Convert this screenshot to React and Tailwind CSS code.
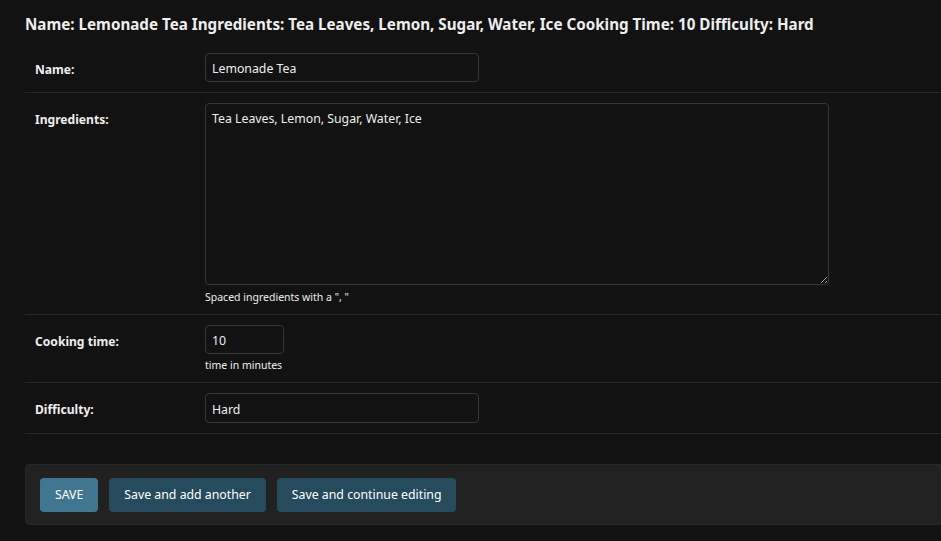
const font = { fontFamily: '"Noto Sans", "Open Sans", sans-serif' };

const Row = ({ label, children }) => (
  <div className="flex px-[10px] py-[10px] border-b border-[#272727]">
    <label className="w-[170px] shrink-0 pt-[9px] text-[12.1px] font-bold text-[#eeeeee] leading-[16px]">
      {label}
    </label>
    <div className="flex flex-col">{children}</div>
  </div>
);

const Help = ({ children, top = "mt-[5px]" }) => (
  <div className={`${top} text-[10.5px] leading-[14px] text-[#eeeeee]`}>{children}</div>
);

const field =
  "px-[6px] rounded-[4px] border border-[#353535] bg-[#121212] text-[12.3px] text-[#eeeeee] outline-none";

const btn = "h-[34px] px-[15px] pt-[2px] rounded-[4px] text-[12.3px] text-white";

export default function App() {
  return (
    <div
      className="w-[941px] h-[541px] overflow-hidden bg-[#121212] text-[#eeeeee] pl-[25px]"
      style={font}
    >
      <h2 className="pt-[14px] h-[43px] text-[15.2px] font-bold leading-[20px] whitespace-nowrap">
        Name: Lemonade Tea Ingredients: Tea Leaves, Lemon, Sugar, Water, Ice Cooking Time: 10 Difficulty: Hard
      </h2>

      <div>
        <Row label="Name:">
          <input defaultValue="Lemonade Tea" className={`w-[274px] h-[29px] pt-[2px] ${field}`} />
        </Row>
        <Row label="Ingredients:">
          <textarea
            defaultValue="Tea Leaves, Lemon, Sugar, Water, Ice"
            className={`w-[624px] h-[182px] pt-[6px] pb-[5px] leading-[18px] ${field}`}
          />
          <Help>Spaced ingredients with a ", "</Help>
        </Row>
        <Row label="Cooking time:">
          <input defaultValue="10" className={`w-[79px] h-[29px] pt-[2px] ${field}`} />
          <Help top="mt-[4px]">time in minutes</Help>
        </Row>
        <Row label="Difficulty:">
          <input defaultValue="Hard" className={`w-[274px] h-[30px] pt-[2px] ${field}`} />
        </Row>
      </div>

      <div className="mt-[30px] h-[61px] flex items-center gap-[11px] px-[14px] bg-[#212121] border border-[#272727] rounded-l-[4px]">
        <button className={`${btn} bg-[#417690]`}>SAVE</button>
        <button className={`${btn} bg-[#264b5d]`}>Save and add another</button>
        <button className={`${btn} bg-[#264b5d] px-[14px]`}>Save and continue editing</button>
      </div>
    </div>
  );
}
